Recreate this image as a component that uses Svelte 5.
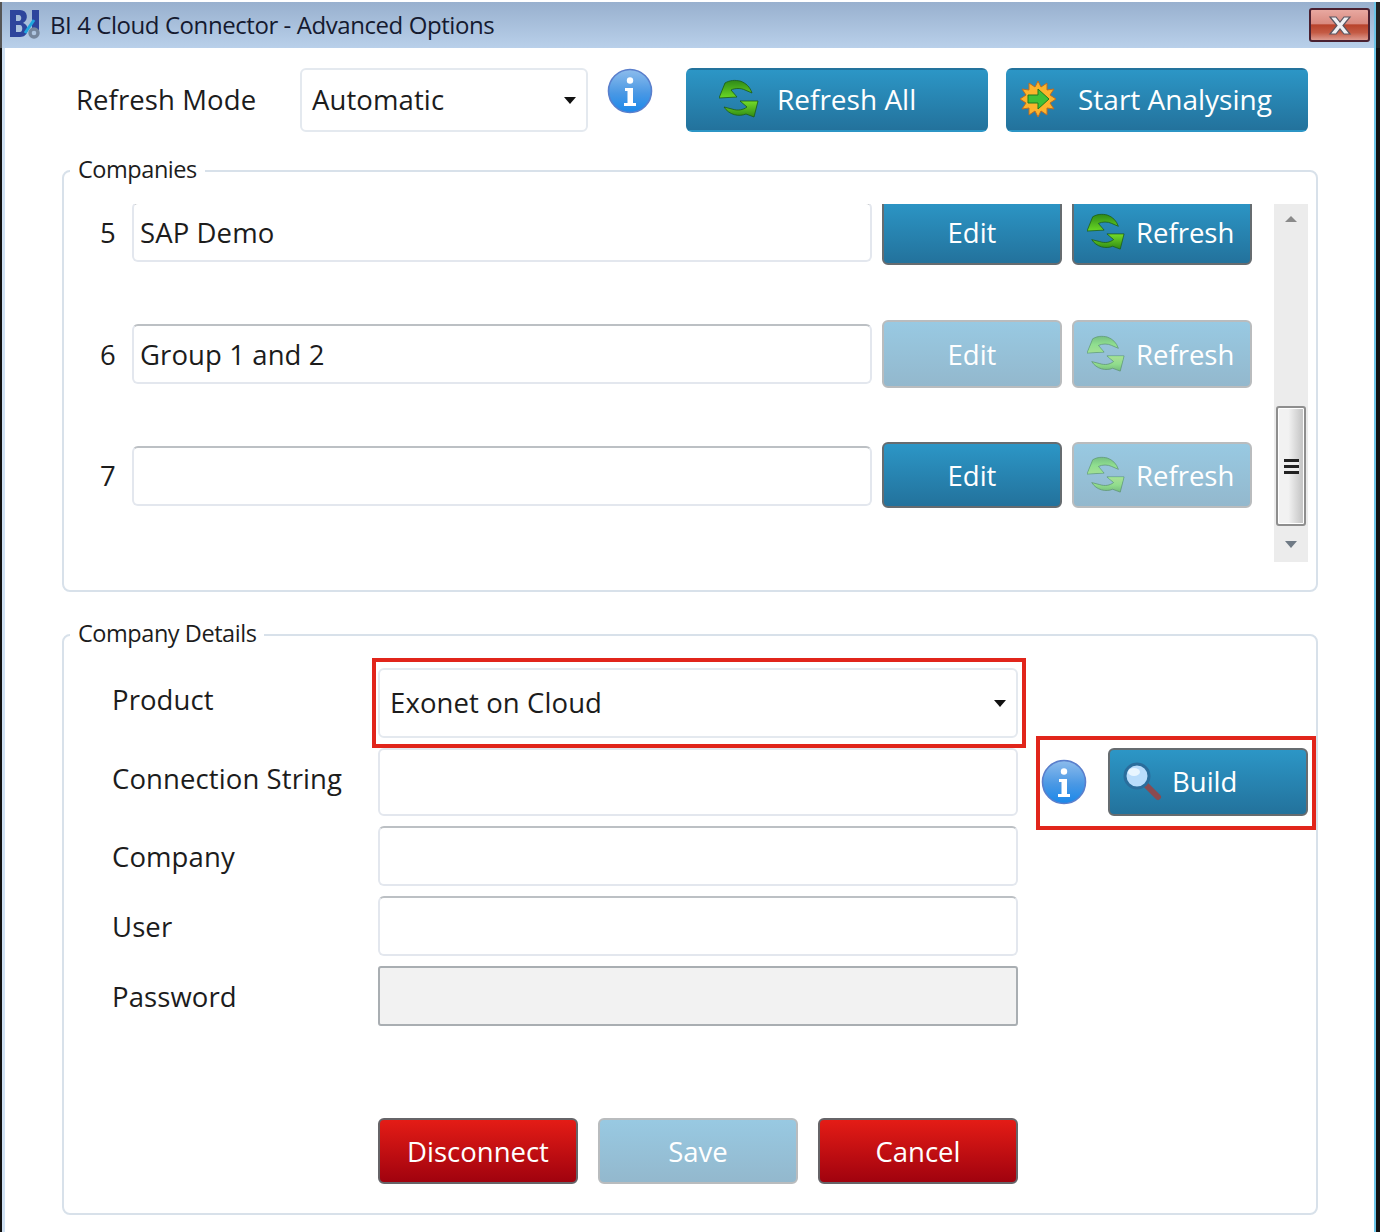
<script>
	const companies = [
		{ num: 5, name: 'SAP Demo', edit: true, refresh: true },
		{ num: 6, name: 'Group 1 and 2', edit: false, refresh: false },
		{ num: 7, name: '', edit: true, refresh: false }
	];
	const details = ['Connection String', 'Company', 'User', 'Password'];
</script>

{#snippet refreshIcon(size)}
	<svg class="ico" width={size} height={size} viewBox="0 0 40 40">
		<defs>
			<linearGradient id="arrow-top" x1="0" y1="0" x2="0" y2="1">
				<stop offset="0" stop-color="#2f8a18" />
				<stop offset="1" stop-color="#6ad824" />
			</linearGradient>
			<linearGradient id="arrow-bottom" x1="0" y1="0" x2="0" y2="1">
				<stop offset="0" stop-color="#74dc2a" />
				<stop offset="1" stop-color="#2f8a14" />
			</linearGradient>
		</defs>
		<path
			d="M0 19 L6 4 C11 1 16 1 21 2 C27 4 31 8 33 14 L26 11 C22 9 16 9 12 11 L18 18 Z"
			fill="url(#arrow-top)"
			stroke="#1c5a14"
			stroke-width="0.8"
		/>
		<path
			d="M39 22 L35 38 L27 35 C20 38 10 36 5 28 L13 30 C19 32 24 31 28 28 L21 22 Z"
			fill="url(#arrow-bottom)"
			stroke="#1c5a14"
			stroke-width="0.8"
		/>
	</svg>
{/snippet}

{#snippet infoIcon()}
	<svg class="info" width="46" height="46" viewBox="0 0 46 46">
		<defs>
			<linearGradient id="infobg" x1="0" y1="0" x2="0" y2="1">
				<stop offset="0" stop-color="#8dbcec" />
				<stop offset="0.55" stop-color="#4a98e4" />
				<stop offset="1" stop-color="#1a88ea" />
			</linearGradient>
		</defs>
		<circle cx="23" cy="23" r="21.5" fill="url(#infobg)" stroke="#5a7fcc" stroke-width="1.6" />
		<circle cx="23" cy="12.5" r="3.2" fill="#fff" />
		<path d="M18 20 H26 V35 H29 V38 H17 V35 H20.5 V23 H18 Z" fill="#fff" />
	</svg>
{/snippet}

<div class="window">
	<header class="titlebar">
		<svg class="logo" width="36" height="36" viewBox="0 0 36 36">
			<path
				d="M2 3 H12 C20 3 21 13 15 16 C22 18 21 30 12 30 H2 Z M8 8 V14 H11 C14 14 14 8 11 8 Z M8 18 V25 H12 C15 25 15 18 12 18 Z"
				fill="#2d459c"
				fill-rule="evenodd"
			/>
			<rect x="24" y="3" width="7" height="20" fill="#2d459c" />
			<path d="M17 26 L26 13" stroke="#1ea6de" stroke-width="3" />
			<circle cx="26" cy="26" r="4" fill="none" stroke="#75869c" stroke-width="3.4" />
		</svg>
		<span class="title">BI 4 Cloud Connector - Advanced Options</span>
		<button class="close" aria-label="Close">
			<svg width="24" height="19" viewBox="0 0 24 19">
				<path
					d="M2 1 H8 L12 6 L16 1 H22 L15 9.5 L22 18 H16 L12 13 L8 18 H2 L9 9.5 Z"
					fill="#f0f0f3"
					stroke="#5b5560"
					stroke-width="1.2"
				/>
			</svg>
		</button>
	</header>

	<div class="body">
		<div class="toolbar">
			<span class="mode-label">Refresh Mode</span>
			<div class="select mode-select">
				<span>Automatic</span>
				<i class="caret"></i>
			</div>
			{@render infoIcon()}
			<button class="btn blue wide">
				{@render refreshIcon(40)}
				<span>Refresh All</span>
			</button>
			<button class="btn blue wide start">
				<svg class="ico" width="36" height="36" viewBox="0 0 36 36">
					<path
						d="M18 0 L21 6 L27 2 L27 9 L34 8 L30 14 L36 18 L30 22 L34 28 L27 27 L27 34 L21 30 L18 36 L15 30 L9 34 L9 27 L2 28 L6 22 L0 18 L6 14 L2 8 L9 9 L9 2 L15 6 Z"
						fill="#fcb42c"
						stroke="#bb6c24"
						stroke-width="1"
					/>
					<path d="M8 14 H18 V8 L29 18 L18 28 V22 H8 Z" fill="#3fc038" stroke="#1f7a20" stroke-width="1" />
				</svg>
				<span>Start Analysing</span>
			</button>
		</div>

		<fieldset class="group companies">
			<legend>Companies</legend>
			<div class="list-wrap">
				<div class="list">
					{#each companies as c}
						<div class="row">
							<span class="num">{c.num}</span>
							<input class="field" type="text" value={c.name} />
							<button class="btn small" class:blue={c.edit} class:off={!c.edit}>Edit</button>
							<button class="btn small with-icon" class:blue={c.refresh} class:off={!c.refresh}>
								{@render refreshIcon(38)}
								<span>Refresh</span>
							</button>
						</div>
					{/each}
				</div>
				<div class="scrollbar">
					<i class="arrow up"></i>
					<div class="thumb"><b></b></div>
					<i class="arrow down"></i>
				</div>
			</div>
		</fieldset>

		<fieldset class="group details">
			<legend>Company Details</legend>
			<div class="form">
				<span class="label raised">Product</span>
				<div class="marked product-mark">
					<div class="select product-select">
						<span>Exonet on Cloud</span>
						<i class="caret"></i>
					</div>
				</div>
				<span></span>

				{#each details as d, i}
					<span class="label" class:raised={i === 0}>{d}</span>
					<input class="field" class:first={i === 0} type="text" disabled={d === 'Password'} />
					{#if i === 0}
						<div class="marked build-mark">
							{@render infoIcon()}
							<button class="btn blue build">
								<svg class="ico" width="40" height="40" viewBox="0 0 40 40">
									<path d="M23 23 L36 36" stroke="#8a4a50" stroke-width="6" stroke-linecap="round" />
									<circle cx="15" cy="15" r="12" fill="#b9dcfb" stroke="#2a6d9c" stroke-width="3" />
									<ellipse cx="12" cy="11" rx="6" ry="4" fill="#e8f5ff" />
								</svg>
								<span>Build</span>
							</button>
						</div>
					{:else}
						<span></span>
					{/if}
				{/each}
			</div>
			<div class="actions">
				<button class="btn red">Disconnect</button>
				<button class="btn off">Save</button>
				<button class="btn red">Cancel</button>
			</div>
		</fieldset>
	</div>
</div>

<style>
	:global(body) {
		background: #fff;
	}
	.window {
		width: 1380px;
		height: 1232px;
		overflow: hidden;
		font-family: 'Open Sans', sans-serif;
		color: #1c1c1c;
		background: #fff;
	}
	.titlebar {
		height: 46px;
		margin-top: 2px;
		display: flex;
		align-items: center;
		padding: 0 6px 0 6px;
		background: linear-gradient(#98b0ce, #b9d0ea);
		box-sizing: border-box;
		border-left: 2px solid #555;
		border-right: 4px solid #222;
		box-shadow: inset -2px 0 #6cc4e6;
	}
	.logo {
		margin-right: 6px;
	}
	.title {
		font-size: 24px;
		letter-spacing: -0.43px;
		color: #151a30;
		padding-bottom: 2px;
	}
	.close {
		margin-left: auto;
		width: 61px;
		height: 34px;
		padding: 0;
		display: flex;
		align-items: center;
		justify-content: center;
		border: 2px solid #4a2030;
		border-radius: 3px;
		background: linear-gradient(#e8a8a0 0%, #d98a80 45%, #b8432c 50%, #c45a44 75%, #dd9a90 100%);
	}
	.body {
		height: 1184px;
		box-sizing: border-box;
		border-left: 2px solid #111;
		border-right: 4px solid #111;
		box-shadow: inset 3px 0 #cfe0f2, inset -2px 0 #6cc4e6;
		padding: 20px 56px 0 60px;
	}
	.toolbar {
		display: flex;
		align-items: flex-start;
		height: 64px;
		padding-left: 15px;
	}
	.mode-label {
		width: 223px;
		margin-left: -1px;
		padding-right: 1px;
		line-height: 64px;
		font-size: 27.5px;
		letter-spacing: 0.1px;
	}
	.select {
		display: flex;
		align-items: center;
		justify-content: space-between;
		box-sizing: border-box;
		background: #fff;
		border: 2px solid #e4e9ef;
		border-radius: 6px;
		font-size: 27.5px;
		letter-spacing: 0.1px;
		padding: 0 10px 0 10px;
	}
	.select span {
		padding-bottom: 2px;
	}
	.mode-select {
		width: 288px;
		height: 64px;
	}
	.caret {
		width: 0;
		height: 0;
		border: 6px solid transparent;
		border-top: 7px solid #111;
		border-bottom: 0;
	}
	.info {
		display: block;
		flex: none;
		margin: 0 33px 0 19px;
	}
	.btn {
		display: flex;
		align-items: center;
		justify-content: center;
		box-sizing: border-box;
		padding: 0;
		border: 2px solid transparent;
		border-radius: 6px;
		color: #fff;
		font-family: inherit;
		font-size: 27.5px;
		letter-spacing: 0;
	}
	.blue {
		background: linear-gradient(#2c96c6, #23729c);
		border-color: #666c70;
	}
	.off {
		background: linear-gradient(#98c9e2, #93b8cd);
		border-color: #b9bcbe;
	}
	.off .ico {
		opacity: 0.6;
		filter: brightness(1.45) saturate(0.7);
	}
	.red {
		background: linear-gradient(#e41c16, #a0020e);
		border-color: #666468;
	}
	.wide {
		width: 302px;
		height: 64px;
		justify-content: flex-start;
		padding: 0 0 2px 31px;
		border-color: transparent;
		font-size: 28px;
	}
	.wide .ico {
		margin-right: 18px;
	}
	.start {
		margin-left: 18px;
		padding-left: 12px;
	}
	.start .ico {
		margin-right: 22px;
	}
	.group {
		margin: 0;
		padding: 0;
		border: 2px solid #d8e1ea;
		border-radius: 8px;
		width: 1256px;
		box-sizing: border-box;
	}
	legend {
		margin-left: 6px;
		padding: 0 8px 2px;
		font-size: 23.5px;
		letter-spacing: -0.45px;
		line-height: 33px;
	}
	.companies {
		margin-top: 21px;
		height: 439px;
		padding-top: 16px;
	}
	.list-wrap {
		display: flex;
		height: 358px;
		padding-left: 26px;
	}
	.list {
		width: 1162px;
		overflow: hidden;
		display: flex;
		flex-direction: column;
		gap: 54px;
	}
	.row {
		flex: none;
		display: grid;
		grid-template-columns: 42px 740px 190px 190px;
		align-items: center;
		height: 66px;
	}
	.row:first-child {
		margin-top: -5px;
		margin-bottom: 1px;
	}
	.row:nth-child(2) {
		height: 68px;
	}
	.row:last-child .field {
		margin-top: 2px;
	}
	.num {
		font-size: 27.5px;
		padding-left: 10px;
	}
	.field {
		box-sizing: border-box;
		width: 100%;
		height: 60px;
		margin: 0;
		padding: 0 6px;
		border: 2px solid #e3e7ee;
		border-top-color: #bcc0c4;
		border-radius: 6px;
		font-family: inherit;
		font-size: 27.5px;
		letter-spacing: 0.1px;
		color: #1c1c1c;
		background: #fff;
		outline: none;
	}
	.field.first {
		height: 68px;
		border-top-color: #e3e7ee;
	}
	.field:disabled {
		background: #f2f2f2;
		border-color: #a9aeb2;
		border-radius: 3px;
	}
	.small {
		height: 100%;
		width: 180px;
		margin-left: 10px;
	}
	.with-icon {
		justify-content: flex-start;
		padding-left: 13px;
	}
	.with-icon .ico {
		margin-right: 11px;
	}
	.scrollbar {
		margin-left: 22px;
		width: 34px;
		height: 358px;
		background: #ececec;
		display: flex;
		flex-direction: column;
		align-items: center;
	}
	.arrow {
		display: block;
		width: 0;
		height: 0;
		border: 6px solid transparent;
	}
	.arrow.up {
		margin-top: 12px;
		border-bottom: 6px solid #8a8a8a;
		border-top: 0;
	}
	.arrow.down {
		margin-top: 15px;
		border-top: 7px solid #6f7a85;
		border-bottom: 0;
	}
	.thumb {
		margin-top: 184px;
		box-sizing: border-box;
		width: 30px;
		height: 120px;
		border: 2px solid #8e8e8e;
		border-radius: 3px;
		background: linear-gradient(90deg, #f2f2f2 40%, #c8c8c8 90%);
		display: flex;
		align-items: center;
		justify-content: center;
		box-shadow: inset 0 0 0 1px #fff;
	}
	.thumb b {
		display: block;
		width: 15px;
		height: 15px;
		background: repeating-linear-gradient(#222 0 3px, #eee 3px 6px);
	}
	.details {
		margin-top: 25px;
		height: 598px;
		padding-top: 16px;
	}
	.form {
		display: grid;
		grid-template-columns: 266px 640px auto;
		grid-template-rows: 70px 68px 60px 60px 60px;
		row-gap: 10px;
		padding-left: 48px;
		align-items: center;
	}
	.label {
		font-size: 27.5px;
		letter-spacing: 0.1px;
	}
	.label.raised {
		margin-top: -7px;
	}
	.product-select {
		width: 640px;
		height: 70px;
	}
	.marked {
		outline: 4px solid #e1251b;
	}
	.product-mark {
		margin: 0 -4px 0 -2px;
		padding: 6px 4px 6px 2px;
		align-self: center;
	}
	.build-mark {
		display: flex;
		align-items: center;
		align-self: start;
		width: 272px;
		height: 86px;
		margin: -8px 0 0 22px;
		padding: 0 0 2px 1px;
		box-sizing: border-box;
	}
	.build-mark .info {
		margin: 0 21px 0 0;
	}
	.build {
		width: 200px;
		height: 68px;
		justify-content: flex-start;
		padding: 0 0 2px 12px;
	}
	.build .ico {
		margin-right: 10px;
	}
	.actions {
		display: flex;
		gap: 20px;
		margin: 92px 0 0 314px;
	}
	.actions .btn {
		width: 200px;
		height: 66px;
	}
</style>
